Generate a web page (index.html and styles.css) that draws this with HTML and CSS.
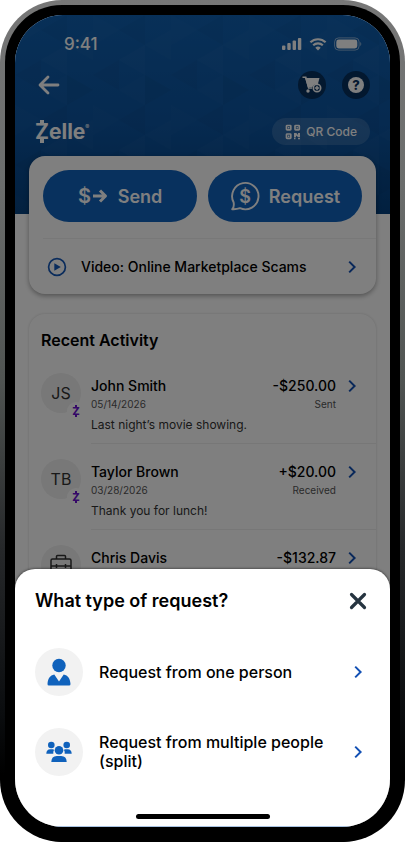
FILE: index.html
```html
<!DOCTYPE html>
<html lang="en">
<head>
<meta charset="utf-8">
<meta name="viewport" content="width=device-width, initial-scale=1">
<title>Zelle request</title>
<link rel="stylesheet" href="styles.css">
</head>
<body>
<svg class="defs" aria-hidden="true">
  <symbol id="chevron" viewBox="0 0 10 14"><path d="M2.2 1.6 7.6 7l-5.4 5.4" fill="none" stroke="currentColor" stroke-width="2"/></symbol>
</svg>
<div class="phone">
<div class="bezel">
<div class="screen">
  <main class="app">
    <header class="top">
      <svg class="pattern" aria-hidden="true">
        <defs>
          <pattern id="tri" width="78" height="90" patternUnits="userSpaceOnUse">
            <path d="M0 0 26 15 0 30z" fill="#fff" opacity=".012"/>
            <path d="M26 15 52 0v30z" fill="#000" opacity=".03"/>
            <path d="M52 30 78 15v30z" fill="#fff" opacity=".015"/>
            <path d="M26 45 52 30v30z" fill="#fff" opacity=".02"/>
            <path d="M0 60 26 45v30z" fill="#000" opacity=".03"/>
            <path d="M52 60 78 75 52 90z" fill="#000" opacity=".04"/>
            <path d="M26 75 52 60v30z" fill="#fff" opacity=".012"/>
          </pattern>
        </defs>
        <rect width="100%" height="100%" fill="url(#tri)"/>
      </svg>
      <div class="status">
        <span class="time">9:41</span>
        <span class="signals">
          <svg width="20" height="14" viewBox="0 0 20 14" fill="currentColor"><rect x="0" y="8.5" width="3.4" height="4.5" rx="1"/><rect x="5.3" y="6" width="3.4" height="7" rx="1"/><rect x="10.6" y="3.5" width="3.4" height="9.500" rx="1"/><rect x="15.900" y="1" width="3.400" height="12" rx="1"/></svg>
          <svg width="18" height="14" viewBox="0 0 18 14" fill="none" stroke="currentColor" stroke-width="2.2"><path d="M1.400 5.300a11 11 0 0 1 15.200 0M4.200 8.300a7 7 0 0 1 9.600 0"/><path d="M9 13.500 6.300 10.800a4 4 0 0 1 5.400 0z" fill="currentColor" stroke="none"/></svg>
          <svg width="28" height="14" viewBox="0 0 28 14"><rect x=".6" y=".9" width="24.500" height="12.200" rx="4" fill="none" stroke="currentColor" opacity=".5"/><rect x="2.300" y="2.600" width="21" height="8.800" rx="2.400" fill="currentColor"/><path d="M26.300 5v4c1.300-.5 1.300-3.500 0-4z" fill="currentColor" opacity=".6"/></svg>
        </span>
      </div>
      <nav class="nav">
        <button class="back" aria-label="Back"><svg width="22" height="20" viewBox="0 0 22 20" fill="none" stroke="currentColor" stroke-width="2.800" stroke-linecap="round" stroke-linejoin="round"><path d="M10 2 2 10l8 8M2.500 10H20"/></svg></button>
        <div class="tools">
          <button class="round" aria-label="Cart"><svg width="20" height="18" viewBox="0 0 20 18"><g fill="currentColor"><path d="M3 2h14.500l-1.600 6a5 5 0 0 0-5.500 3H5.800z"/><circle cx="6" cy="15" r="1.700"/></g><path d="M.5 1.300h3.300L6.600 12H10" fill="none" stroke="currentColor" stroke-width="1.500"/><circle cx="15" cy="12" r="3.700" fill="#06305f" stroke="currentColor" stroke-width="1.600"/><path d="M15 9.700v4.600M12.700 12h4.600" stroke="currentColor" stroke-width="1.500"/></svg></button>
          <button class="round" aria-label="Help"><span class="help">?</span></button>
        </div>
      </nav>
      <div class="brand">
        <span class="logo"><span class="zmark">Z</span>elle<sup>®</sup></span>
        <button class="qr"><svg width="16" height="16" viewBox="0 0 16 16"><g fill="none" stroke="currentColor" stroke-width="1.700"><rect x="1.500" y="1.500" width="4.300" height="4.300" rx=".6"/><rect x="10" y="1.500" width="4.300" height="4.300" rx=".6"/><rect x="1.500" y="10" width="4.300" height="4.300" rx=".6"/></g><path d="M3 3h1.400v1.400H3zM11.500 3h1.400v1.400h-1.400zM3 11.500h1.400v1.400H3zM9 9h2.300l1.700 2V9h2v4h-2l-2-1.500v1.700H9zM9 13.700h1.500v1.500H9zM13 13.700h2v1.500h-2z" fill="currentColor"/></svg>QR Code</button>
      </div>
    </header>

    <section class="card actions">
      <div class="buttons">
        <button class="primary"><svg width="31" height="24" viewBox="0 0 31 24"><text x="0" y="19" class="dollar big">$</text><path d="M15 12h12M22 6.500l5.500 5.500-5.500 5.500" fill="none" stroke="currentColor" stroke-width="3" stroke-linejoin="round"/></svg>Send</button>
        <button class="primary"><svg width="30" height="30" viewBox="0 0 30 30"><path d="M3.600 21.200A13.200 13.200 0 1 1 10 27.200c-2.600.9-5 1.200-7.800 1 1.500-1.400 2.100-3 1.400-7z" fill="none" stroke="currentColor" stroke-width="1.900" stroke-linejoin="round"/><text x="15" y="21.500" text-anchor="middle" class="dollar">$</text></svg>Request</button>
      </div>
      <a class="video" href="#"><svg width="20" height="20" viewBox="0 0 20 20"><circle cx="10" cy="10" r="8.400" fill="none" stroke="currentColor" stroke-width="1.700"/><path d="M7.300 6.300v7.400L13.800 10z" fill="currentColor"/></svg><span>Video: Online Marketplace Scams</span><svg class="chev"><use href="#chevron"/></svg></a>
    </section>

    <section class="card activity">
      <h2>Recent Activity</h2>
      <a class="item" href="#">
        <span class="avatar">JS<span class="badge"><span class="zmark">Z</span></span></span>
        <span class="entry">
          <span class="who"><b>John Smith</b><small>05/14/2026</small><span class="memo">Last night’s movie showing.</span></span>
          <span class="sum"><b>-$250.00</b><small>Sent</small></span>
          <svg class="chev"><use href="#chevron"/></svg>
        </span>
      </a>
      <a class="item" href="#">
        <span class="avatar">TB<span class="badge"><span class="zmark">Z</span></span></span>
        <span class="entry">
          <span class="who"><b>Taylor Brown</b><small>03/28/2026</small><span class="memo">Thank you for lunch!</span></span>
          <span class="sum"><b>+$20.00</b><small>Received</small></span>
          <svg class="chev"><use href="#chevron"/></svg>
        </span>
      </a>
      <a class="item" href="#">
        <span class="avatar"><svg width="22" height="22" viewBox="0 0 22 22" fill="none" stroke="currentColor" stroke-width="1.500"><rect x="1" y="5" width="20" height="15" rx="1.500"/><path d="M6.500 5V2.500q0-1 1-1h7q1 0 1 1V5M1 12h20M6.500 10v4M15.500 10v4"/></svg></span>
        <span class="entry">
          <span class="who"><b>Chris Davis</b></span>
          <span class="sum"><b>-$132.87</b></span>
          <svg class="chev"><use href="#chevron"/></svg>
        </span>
      </a>
    </section>
  </main>
  <div class="scrim"></div>
  <section class="sheet" role="dialog" aria-labelledby="sheet-title">
    <div class="sheet-head">
      <h1 id="sheet-title">What type of request?</h1>
      <button class="close" aria-label="Close"><svg width="18" height="18" viewBox="0 0 18 18"><path d="m2.500 2.500 13 13m0-13-13 13" stroke="currentColor" stroke-width="3.200" stroke-linecap="round"/></svg></button>
    </div>
    <a class="option" href="#">
      <span class="disc"><svg width="24" height="28" viewBox="0 0 24 28" fill="currentColor"><circle cx="12" cy="7.500" r="6.700"/><path d="M.5 26c.4-5.500 2.500-8.600 6.800-9.500L12 23.500l4.700-7c4.300.9 6.400 4 6.800 9.500q.1 1.500-1.500 1.500H2Q.4 27.500.5 26z"/></svg></span>
      <span class="label">Request from one person</span>
      <svg class="chev"><use href="#chevron"/></svg>
    </a>
    <a class="option" href="#">
      <span class="disc"><svg width="26" height="22" viewBox="0 0 26 22" fill="currentColor"><circle cx="5.300" cy="4" r="3.300"/><circle cx="20.700" cy="4" r="3.300"/><path d="M.3 12.800q.1-4.500 4-4.500h2.500q1 0 1.200.7-1 1.700-.7 3.800zM25.700 12.800q-.1-4.500-4-4.500h-2.500q-1 0-1.200.7 1 1.700.7 3.800z"/><circle cx="13" cy="9.300" r="4.300"/><path d="M5.300 21q.1-6 5.500-6h4.400q5.400 0 5.500 6z"/></svg></span>
      <span class="label">Request from multiple people (split)</span>
      <svg class="chev"><use href="#chevron"/></svg>
    </a>
    <div class="home"></div>
  </section>
</div>
</div>
</div>
</body>
</html>
```
FILE: styles.css
```css
* { box-sizing: border-box; }
body {
  margin: 0;
  min-height: 100vh;
  display: flex;
  background: #fff;
  font-family: Inter, "Liberation Sans", sans-serif;
  color: #000;
}
h1, h2 { margin: 0; font-weight: 600; }
button { font: inherit; color: inherit; border: 0; background: none; padding: 0; }
a { color: inherit; text-decoration: none; }
svg { display: block; flex: none; }
b { font-weight: 500; }
.defs { position: absolute; width: 0; height: 0; }

.phone {
  flex: 1;
  display: flex;
  padding: 5px 5px 0;
  border-radius: 62px;
  background: linear-gradient(#777 0%, #6b6d6c 22%, #505452 45%, #26282a 65%, #0a0c0e 85%, #000 92%);
}
.bezel {
  flex: 1;
  display: flex;
  padding: 10px 10px 15px;
  border-radius: 57px 57px 62px 62px;
  background: #000;
}
.screen {
  flex: 1;
  position: relative;
  overflow: hidden;
  border-radius: 48px;
  background: #fff;
}

.top {
  position: relative;
  padding: 18px 20px 69px;
  background: linear-gradient(#1060b0, #0c54a0 55%, #04407e);
  color: #fff;
}
.pattern { position: absolute; inset: 0; width: 100%; height: 100%; }
.status, .nav, .brand {
  position: relative;
  display: flex;
  align-items: center;
  justify-content: space-between;
}
.status { height: 22px; padding: 0 8px 0 29px; }
.time { font-size: 17px; font-weight: 500; }
.signals { display: flex; gap: 7px; }
.nav { margin: 16px 0 19px; padding-left: 3px; }
.tools { display: flex; gap: 16px; }
.round {
  width: 28px;
  height: 28px;
  border-radius: 50%;
  background: #06305f;
  display: grid;
  place-items: center;
}
.help {
  width: 16px;
  height: 16px;
  border-radius: 50%;
  background: #fff;
  color: #06305f;
  font-size: 13px;
  line-height: 16px;
  font-weight: 800;
}
.brand { height: 27px; }
.logo { font-size: 21px; line-height: 27px; font-weight: 700; }
.logo sup { font-size: 6px; line-height: 6px; vertical-align: 10px; font-weight: 400; }
.zmark { position: relative; display: inline-block; }
.zmark::before, .zmark::after {
  content: "";
  position: absolute;
  left: 38%;
  width: 24%;
  height: 18%;
  background: currentColor;
}
.zmark::before { top: 6%; }
.zmark::after { bottom: 6%; }
.qr {
  display: flex;
  align-items: center;
  gap: 5px;
  height: 27px;
  padding: 0 13px;
  border-radius: 14px;
  background: rgba(255, 255, 255, .14);
  font-size: 12px;
  font-weight: 500;
}

.card {
  position: relative;
  margin: 0 14px;
  border-radius: 16px;
  background: #fff;
}
.actions { margin-top: -58px; padding: 14px 0 0 14px; box-shadow: 0 2px 5px rgba(0, 0, 0, .35); }
.buttons { display: grid; grid-template-columns: 1fr 1fr; gap: 11px; padding: 0 14px 16px 0; }
.primary {
  display: flex;
  align-items: center;
  justify-content: center;
  gap: 9px;
  height: 52px;
  border-radius: 26px;
  background: #1062bc;
  color: #fff;
  font-size: 18px;
  font-weight: 600;
}
.dollar { font-size: 18px; font-weight: 600; fill: currentColor; }
.dollar.big { font-size: 20px; font-weight: 600; }
.video {
  display: flex;
  align-items: center;
  gap: 14px;
  height: 56px;
  padding: 0 19px 0 4px;
  border-top: 1px solid #f0f0f0;
  font-size: 14px;
  font-weight: 500;
}
.video span { flex: 1; }
.video svg:first-child { color: #1558b8; }
.chev { width: 10px; height: 14px; color: #1250b4; }

.activity { margin-top: 20px; padding-left: 12px; box-shadow: 0 0 3px rgba(0, 0, 0, .16); }
.activity h2 { padding: 16px 0 23px; font-size: 16px; line-height: 20px; }
.item { display: flex; gap: 10px; height: 86px; }
.avatar {
  position: relative;
  flex: none;
  width: 40px;
  height: 40px;
  border-radius: 50%;
  background: #f0f0f0;
  color: #333;
  display: grid;
  place-items: center;
  font-size: 16px;
}
.badge {
  position: absolute;
  right: -4px;
  bottom: -7px;
  width: 18px;
  height: 18px;
  border-radius: 50%;
  background: #fff;
  color: #6a10d0;
  display: grid;
  place-items: center;
  font-size: 11px;
  line-height: 13px;
  font-weight: 800;
}
.entry {
  flex: 1;
  display: flex;
  height: 71px;
  border-bottom: 1px solid #eee;
  padding: 3px 19px 0 0;
}
.who, .sum { display: flex; flex-direction: column; font-size: 14px; line-height: 20px; }
.who { flex: 1; }
.sum { text-align: right; padding-right: 11px; }
.entry small { font-size: 10px; line-height: 17px; color: #555; }
.memo { margin-top: 2px; font-size: 12px; color: #333; }
.entry .chev { margin-top: 3px; }

.scrim { position: absolute; inset: 0; background: rgba(0, 0, 0, .5); }
.sheet {
  position: absolute;
  inset: auto 0 0;
  padding: 18px 20px 7px;
  border-radius: 20px 20px 0 0;
  background: #fff;
  border-bottom: 1px solid #a9c3e2;
  box-shadow: 0 0 3px rgba(0, 0, 0, .7);
}
.sheet-head {
  display: flex;
  align-items: center;
  justify-content: space-between;
  padding-right: 3px;
  margin-bottom: 33px;
}
h1 { font-size: 18px; line-height: 28px; }
.close { color: #263440; }
.option { display: flex; align-items: center; gap: 16px; margin-bottom: 32px; padding-right: 7px; }
.disc {
  flex: none;
  width: 48px;
  height: 48px;
  border-radius: 50%;
  background: #f2f2f2;
  color: #1062bc;
  display: grid;
  place-items: center;
}
.label { flex: 1; font-size: 16px; line-height: 19px; font-weight: 500; }
.home { width: 40%; height: 5px; margin: 38px auto 0; border-radius: 3px; background: #000; }
```
